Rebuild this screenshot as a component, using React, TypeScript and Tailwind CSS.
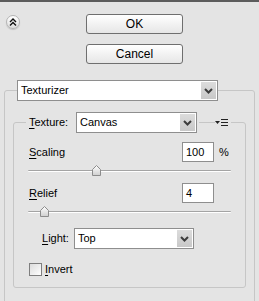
import React from "react";

const Chevron = () => (
  <svg width="9" height="6" viewBox="0 0 9 6">
    <path d="M1 1 L4.5 4.5 L8 1" fill="none" stroke="#3c3c3c" strokeWidth="2" />
  </svg>
);

const Dropdown = ({ value, className }: { value: string; className: string }) => (
  <div className={`flex h-[21px] items-center border border-[#8e8e8e] bg-white ${className}`}>
    <span className="flex-1 pl-[3px] leading-none text-black">{value}</span>
    <div className="mr-[1px] flex h-[17px] w-[15px] items-center justify-center bg-gradient-to-b from-[#dcdcdc] to-[#c8c8c8]">
      <Chevron />
    </div>
  </div>
);

const Thumb = () => (
  <svg width="9" height="11" viewBox="0 0 9 11">
    <defs>
      <linearGradient id="tg" x1="0" y1="0" x2="0" y2="1">
        <stop offset="0" stopColor="#ffffff" />
        <stop offset="1" stopColor="#cfcfcf" />
      </linearGradient>
    </defs>
    <path d="M4.5 0.5 L8.5 4.5 L8.5 10.5 L0.5 10.5 L0.5 4.5 Z" fill="url(#tg)" stroke="#8c8c8c" />
  </svg>
);

const Slider = ({ thumb }: { thumb: string }) => (
  <div className="relative h-[21px]">
    <div className="absolute left-0 right-0 top-[8px] h-[2px] rounded-full border-t border-[#a4a4a4] bg-white" />
    <div className={`absolute top-[3px] ${thumb}`}>
      <Thumb />
    </div>
  </div>
);

const Mn = ({ c }: { c: string }) => <span className="underline underline-offset-2">{c}</span>;

export default function App() {
  return (
    <div className="relative h-[301px] w-[259px] overflow-hidden bg-[#e4e4e4] text-[11px] text-black [font-family:'Liberation_Sans',Arial,sans-serif]">
      <div className="h-[2px] bg-[#5c5c5c]" />

      <div className="flex pt-[12px]">
        <div className="ml-[6px] mt-[1px] flex h-[14px] w-[14px] items-center justify-center rounded-full border border-[#b4b4b4] bg-gradient-to-b from-white to-[#dedede] shadow-[0_1px_1px_rgba(0,0,0,0.15)]">
          <svg width="8" height="8" viewBox="0 0 8 8">
            <path d="M1 4 L4 1 L7 4 M1 7.5 L4 4.5 L7 7.5" fill="none" stroke="#111" strokeWidth="1.4" />
          </svg>
        </div>
        <div className="ml-[66px] flex flex-col gap-[10px]">
          <button className="h-[20px] w-[97px] rounded-[3px] border border-[#6f6f6f] bg-gradient-to-b from-white to-[#e6e6e6] text-[12px] leading-none">
            OK
          </button>
          <button className="h-[20px] w-[97px] rounded-[3px] border border-[#6f6f6f] bg-gradient-to-b from-white to-[#e6e6e6] text-[12px] leading-none">
            Cancel
          </button>
        </div>
      </div>

      <fieldset className="ml-[4px] mt-[16px] w-[251px] rounded-[3px] border border-[#c6c6c6] pb-[30px] pl-[8px] pr-[8px] pt-[11px]">
        <legend className="ml-[4px]">
          <Dropdown value="Texturizer" className="w-[201px]" />
        </legend>

        <fieldset className="rounded-[3px] border border-[#c6c6c6] pb-[9px] pl-[14px] pr-[14px] pt-[9px]">
          <legend className="-ml-[2px] pl-[3px] pr-[1px]">
            <div className="flex items-center">
              <span className="w-[47px]">
                <Mn c="T" />exture:
              </span>
              <Dropdown value="Canvas" className="w-[121px]" />
              <div className="ml-[2px] h-[1px] w-[16px] bg-[#c6c6c6]" />
              <svg width="14" height="7" viewBox="0 0 14 7" className="mr-[1px]">
                <path d="M0 2 L5 2 L2.5 5 Z" fill="#222" />
                <path d="M6 0.5 H13 M6 3.5 H13 M6 6.5 H13" stroke="#222" strokeWidth="1" />
              </svg>
            </div>
          </legend>

          <div className="flex h-[20px] items-center">
            <span className="flex-1 pl-[1px]">
              <Mn c="S" />caling
            </span>
            <div className="flex h-[20px] w-[32px] shrink-0 items-center border border-[#8e8e8e] bg-white pl-[3px]">100</div>
            <span className="w-[17px] shrink-0 whitespace-nowrap pl-[5px]">%</span>
          </div>
          <Slider thumb="left-[64px]" />

          <div className="flex h-[20px] items-center">
            <span className="flex-1 pl-[1px]">
              <Mn c="R" />elief
            </span>
            <div className="flex h-[20px] w-[32px] shrink-0 items-center border border-[#8e8e8e] bg-white pl-[3px]">4</div>
            <span className="w-[17px] shrink-0" />
          </div>
          <Slider thumb="left-[12px]" />

          <div className="mt-[4px] flex items-center pl-[14px]">
            <span className="w-[32px]">
              <Mn c="L" />ight:
            </span>
            <Dropdown value="Top" className="w-[120px]" />
          </div>

          <div className="ml-[1px] mt-[12px] flex items-center">
            <div className="h-[13px] w-[13px] border border-[#7e7e7e] bg-gradient-to-br from-[#dcdcdc] to-white" />
            <span className="ml-[3px]">
              <Mn c="I" />nvert
            </span>
          </div>
        </fieldset>
      </fieldset>
    </div>
  );
}
